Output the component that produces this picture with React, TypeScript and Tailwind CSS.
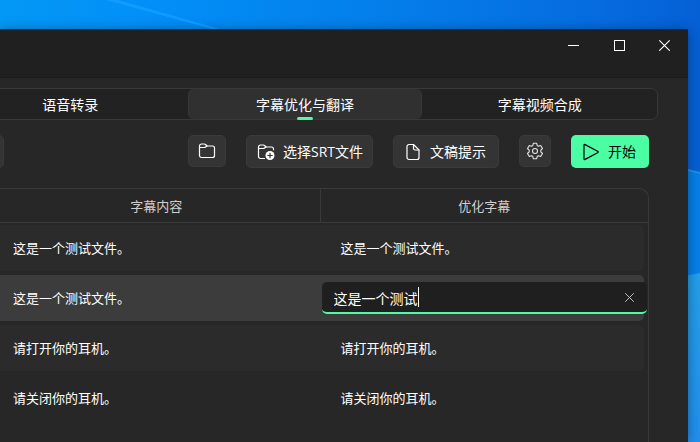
import React from "react";

const stroke = { fill: "none", stroke: "currentColor", strokeLinecap: "round" as const, strokeLinejoin: "round" as const };

function FolderIcon() {
  return (
    <svg width="18" height="18" viewBox="0 0 18 18" {...stroke} strokeWidth="1.2" aria-hidden="true">
      <path d="M1.5 4a2 2 0 0 1 2-2h2.700q.8 0 1.300.5L9 4h5.500a2 2 0 0 1 2 2v7.500a2 2 0 0 1-2 2h-11a2 2 0 0 1-2-2z" />
      <path d="M1.500 5.500h4.700q.8 0 1.300-.5L9 4" />
    </svg>
  );
}

function FolderAddIcon() {
  return (
    <svg width="18" height="18" viewBox="0 0 18 18" {...stroke} strokeWidth="1.2" aria-hidden="true">
      <path d="M7.500 15.500h-4a2 2 0 0 1-2-2V4a2 2 0 0 1 2-2h2.700q.8 0 1.300.5L9 4h5.500a2 2 0 0 1 2 2v.7" />
      <path d="M1.500 5.500h4.700q.8 0 1.300-.5L9 4" />
      <circle cx="13" cy="12.500" r="4.500" fill="currentColor" stroke="none" />
      <path d="M13 10.300v4.400M10.800 12.500h4.400" stroke="#343434" />
    </svg>
  );
}

function DocumentIcon() {
  return (
    <svg width="18" height="18" viewBox="0 0 18 18" {...stroke} strokeWidth="1.2" aria-hidden="true">
      <path d="M5 1.500h4.500L15 7v7.500a2 2 0 0 1-2 2H5a2 2 0 0 1-2-2v-11a2 2 0 0 1 2-2z" />
      <path d="M9.500 1.700v3.800q0 1.500 1.500 1.500h3.800" />
    </svg>
  );
}

function GearIcon() {
  return (
    <svg width="18" height="18" viewBox="0 0 18 18" {...stroke} strokeWidth="1.1" className="text-[#e4e4e4]" aria-hidden="true">
      <path d="M7.300 1.300h3.400l.5 2.200 1.300.8 2.200-.8 1.800 3-1.700 1.600v1.800l1.700 1.600-1.800 3-2.200-.8-1.300.8-.5 2.200H7.300l-.5-2.200-1.300-.8-2.200.8-1.800-3 1.700-1.600V8.100L1.500 6.500l1.800-3 2.200.8 1.300-.8z" />
      <circle cx="9" cy="9" r="2.500" />
    </svg>
  );
}

function PlayIcon() {
  return (
    <svg width="18" height="18" viewBox="0 0 18 18" {...stroke} strokeWidth="1.200" aria-hidden="true">
      <path d="M2 2.300v13.400q0 1.200 1.100.7l12.500-6.600q1.200-.8 0-1.600L3.100 1.600Q2 1.100 2 2.300z" />
    </svg>
  );
}

function CrossIcon({ size }: { size: number }) {
  return (
    <svg width={size} height={size} viewBox="0 0 11 11" {...stroke} strokeWidth="1.1" aria-hidden="true">
      <path d="M.6.6l9.800 9.800M10.400.6L.6 10.400" />
    </svg>
  );
}

function Wallpaper() {
  return (
    <svg className="absolute inset-0 h-full w-full" viewBox="0 0 700 442" preserveAspectRatio="none" aria-hidden="true">
      <defs>
        <linearGradient id="sky" x1="0" x2="1">
          <stop offset="0" stopColor="#0498f5" />
          <stop offset="0.2" stopColor="#0290f8" />
          <stop offset="0.55" stopColor="#047eea" />
          <stop offset="0.85" stopColor="#066ce0" />
          <stop offset="1" stopColor="#0560d6" />
        </linearGradient>
        <linearGradient id="glow" x1="0" x2="0" y1="0" y2="1">
          <stop offset="0" stopColor="#24a0ea" />
          <stop offset="1" stopColor="#2290f0" />
        </linearGradient>
      </defs>
      <rect width="700" height="442" fill="url(#sky)" />
      <path d="M106 0h12l102 29h-8z" fill="#109cff" />
      <path d="M680 168l20 5v269h-20z" fill="#0680ec" />
      <path d="M680 168l20 5" stroke="#1f94ee" strokeWidth="2" />
      <path d="M680 277l20-4v169h-20z" fill="url(#glow)" />
    </svg>
  );
}

const toolButton = "flex items-center rounded-[5px] border border-[#3a3a3a] bg-[#343434] text-white";

const rows = [
  { source: "这是一个测试文件。", result: "这是一个测试文件。", tone: "bg-[#2b2b2b]" },
  { source: "这是一个测试文件。", result: "这是一个测试", tone: "bg-[#3c3c3c]", editing: true },
  { source: "请打开你的耳机。", result: "请打开你的耳机。", tone: "bg-[#2b2b2b]" },
  { source: "请关闭你的耳机。", result: "请关闭你的耳机。", tone: "" },
];

function Editor({ value }: { value: string }) {
  return (
    <div className="absolute inset-x-px top-[9px] flex h-8 items-center rounded-[5px] border-b-2 border-[#4bfea4] bg-[#1f1f1f] px-3">
      <input
        aria-label="优化字幕"
        defaultValue={value}
        className="h-[22px] min-w-0 flex-1 bg-transparent pt-0.5 text-[14px] leading-5 text-white outline-none"
      />
      <span className="absolute left-24 h-5 w-px bg-white" />
      <button aria-label="清除" className="flex size-3 items-center justify-center text-[#cfcfcf]">
        <CrossIcon size={9} />
      </button>
    </div>
  );
}

export default function App() {
  return (
    <div className="relative h-screen overflow-hidden bg-[#0578e8] font-['Open_Sans','Noto_Sans_CJK_SC',sans-serif]">
      <Wallpaper />
      <div className="relative flex h-full pt-[29px] pr-3">
        <main className="min-w-0 flex-1 bg-[#272727] shadow-[0_2px_12px_rgba(0,0,0,0.4)]">
          <header className="flex h-[49px] items-start justify-end border-b border-[#1c1c1c] bg-[#202020] pr-0.5 text-white">
            <button aria-label="最小化" className="flex h-8 w-[46px] items-center justify-center">
              <span className="h-px w-[11px] bg-white" />
            </button>
            <button aria-label="最大化" className="flex h-8 w-[46px] items-center justify-center">
              <span className="size-[11px] border border-white" />
            </button>
            <button aria-label="关闭" className="flex h-8 w-11 items-center justify-center">
              <CrossIcon size={11} />
            </button>
          </header>

          <nav className="mt-[10px] mr-[30px] -ml-12 grid h-8 grid-cols-3 rounded-[7px] border border-[#383838] bg-[#222222] text-[14px] text-white">
            <button>语音转录</button>
            <button className="relative rounded-[6px] border-x border-[#383838] bg-[#303030]">
              字幕优化与翻译
              <span className="absolute -bottom-px left-1/2 h-[3px] w-4 -translate-x-1/2 rounded-full bg-[#4bfea4]" />
            </button>
            <button>字幕视频合成</button>
          </nav>

          <div className="mt-[15px] mr-[39px] flex justify-between text-[14px]">
            <button aria-label="更多" className={`${toolButton} -ml-8 h-[33px] w-9`} />
            <div className="flex items-start gap-5">
              <button aria-label="打开文件夹" className={`${toolButton} h-8 w-[38px] justify-center`}>
                <FolderIcon />
              </button>
              <button className={`${toolButton} h-[33px] w-[127px] gap-2 pl-2.5`}>
                <FolderAddIcon />
                选择SRT文件
              </button>
              <button className={`${toolButton} h-[33px] w-[106px] gap-2 pl-2.5`}>
                <DocumentIcon />
                文稿提示
              </button>
              <button aria-label="设置" className={`${toolButton} size-8 justify-center`}>
                <GearIcon />
              </button>
              <button className="flex h-[33px] w-[78px] items-center gap-2 rounded-[5px] bg-[#4bfea4] pl-[11px] text-black">
                <PlayIcon />
                开始
              </button>
            </div>
          </div>

          <div className="mt-5 mr-[39px] -ml-[7px] h-screen rounded-tr-[10px] border-t border-r border-[#3a3a3a]">
            <table className="w-full table-fixed border-separate border-spacing-0 text-[13px] text-white">
              <thead>
                <tr className="h-[34px] text-[#cfcfcf]">
                  <th className="border-r border-b border-[#3a3a3a] p-0 pt-0.5 font-normal">字幕内容</th>
                  <th className="border-b border-[#3a3a3a] p-0 pt-0.5 font-normal">优化字幕</th>
                </tr>
              </thead>
              <tbody>
                {rows.map((row, i) => (
                  <tr key={i}>
                    <td className="p-0 py-0.5">
                      <div className={`flex h-[46px] items-center pt-0.5 pl-5 ${row.tone}`}>{row.source}</div>
                    </td>
                    <td className="relative p-0 py-0.5">
                      <div className={`mr-1 flex h-[46px] items-center rounded-r-[5px] pt-0.5 pl-5 ${row.tone}`}>
                        {!row.editing && row.result}
                      </div>
                      {row.editing && <Editor value={row.result} />}
                    </td>
                  </tr>
                ))}
              </tbody>
            </table>
          </div>
        </main>
      </div>
    </div>
  );
}
